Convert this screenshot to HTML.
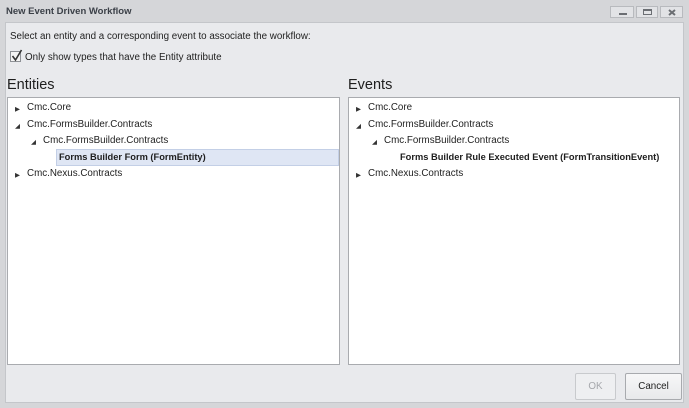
<!DOCTYPE html>
<html><head><style>
*{margin:0;padding:0;box-sizing:border-box}
body{width:689px;height:408px;background:#d5d6d9;font-family:"Liberation Sans",sans-serif;font-size:9.8px;color:#1e1e1e;position:relative;overflow:hidden}
.a{position:absolute;white-space:nowrap}
.title{left:6px;top:6px;font-weight:bold;color:#3a3f47;font-size:9.5px}
.client{left:5px;top:22px;width:679px;height:381px;background:#e9eaed;border:1px solid #c4c6ca}
.wb{top:6px;height:12px;background:#e2e3e6;border:1px solid #b8babe}
.panel{top:97px;height:268px;background:#fff;border:1px solid #a9abaf}
.hdr{font-size:14.5px;color:#1e1e1e}
.tri{font-size:6.5px;color:#333}
.b{font-weight:bold;font-size:9.3px}
.btn{top:373px;height:27px;border:1px solid #a8aaae;background:linear-gradient(#f7f7f8,#e8e9eb);text-align:center;line-height:25px;border-radius:2px}
</style></head><body>
<div class="a title">New Event Driven Workflow</div>
<div class="a wb" style="left:610px;width:24px"><div class="a" style="left:8px;top:6px;width:8px;height:2px;background:#6b6e73"></div></div>
<div class="a wb" style="left:636px;width:22px"><div class="a" style="left:6px;top:2px;width:9px;height:6px;border:1px solid #6b6e73;border-top-width:2px"></div></div>
<div class="a wb" style="left:660px;width:23px"><svg class="a" style="left:7px;top:2px" width="8" height="7"><path d="M1 1L7 6M7 1L1 6" stroke="#6b6e73" stroke-width="2"/></svg></div>
<div class="a client"></div>
<div class="a" style="left:10px;top:31px">Select an entity and a corresponding event to associate the workflow:</div>
<div class="a" style="left:10px;top:51px;width:11px;height:11px;border:1px solid #8e9196;background:#f4f4f4"></div>
<svg class="a" style="left:10px;top:48px" width="14" height="14"><path d="M2.5 8L5.5 12L11.5 2" stroke="#333" stroke-width="1.6" fill="none"/></svg>
<div class="a" style="left:25px;top:52px">Only show types that have the Entity attribute</div>
<div class="a hdr" style="left:7px;top:77px">Entities</div>
<div class="a hdr" style="left:348px;top:77px">Events</div>
<div class="a panel" style="left:7px;width:333px"></div>
<div class="a panel" style="left:348px;width:332px"></div>
<div class="a" style="left:56px;top:149px;width:283px;height:17px;background:#dfe6f4;border:1px solid #c3cfe6"></div>
<div class="a tri" style="left:15px;top:105px">▶</div><div class="a" style="left:27px;top:102px">Cmc.Core</div>
<div class="a tri" style="left:15px;top:122px">◢</div><div class="a" style="left:27px;top:119px">Cmc.FormsBuilder.Contracts</div>
<div class="a tri" style="left:31px;top:138px">◢</div><div class="a" style="left:43px;top:135px">Cmc.FormsBuilder.Contracts</div>
<div class="a b" style="left:59px;top:152px">Forms Builder Form (FormEntity)</div>
<div class="a tri" style="left:15px;top:171px">▶</div><div class="a" style="left:27px;top:168px">Cmc.Nexus.Contracts</div>
<div class="a tri" style="left:356px;top:105px">▶</div><div class="a" style="left:368px;top:102px">Cmc.Core</div>
<div class="a tri" style="left:356px;top:122px">◢</div><div class="a" style="left:368px;top:119px">Cmc.FormsBuilder.Contracts</div>
<div class="a tri" style="left:372px;top:138px">◢</div><div class="a" style="left:384px;top:135px">Cmc.FormsBuilder.Contracts</div>
<div class="a b" style="left:400px;top:152px">Forms Builder Rule Executed Event (FormTransitionEvent)</div>
<div class="a tri" style="left:356px;top:171px">▶</div><div class="a" style="left:368px;top:168px">Cmc.Nexus.Contracts</div>
<div class="a btn" style="left:575px;width:41px;color:#a5a7ab;border-color:#c8cacd;background:#eeeff1">OK</div>
<div class="a btn" style="left:625px;width:57px">Cancel</div>
</body></html>
